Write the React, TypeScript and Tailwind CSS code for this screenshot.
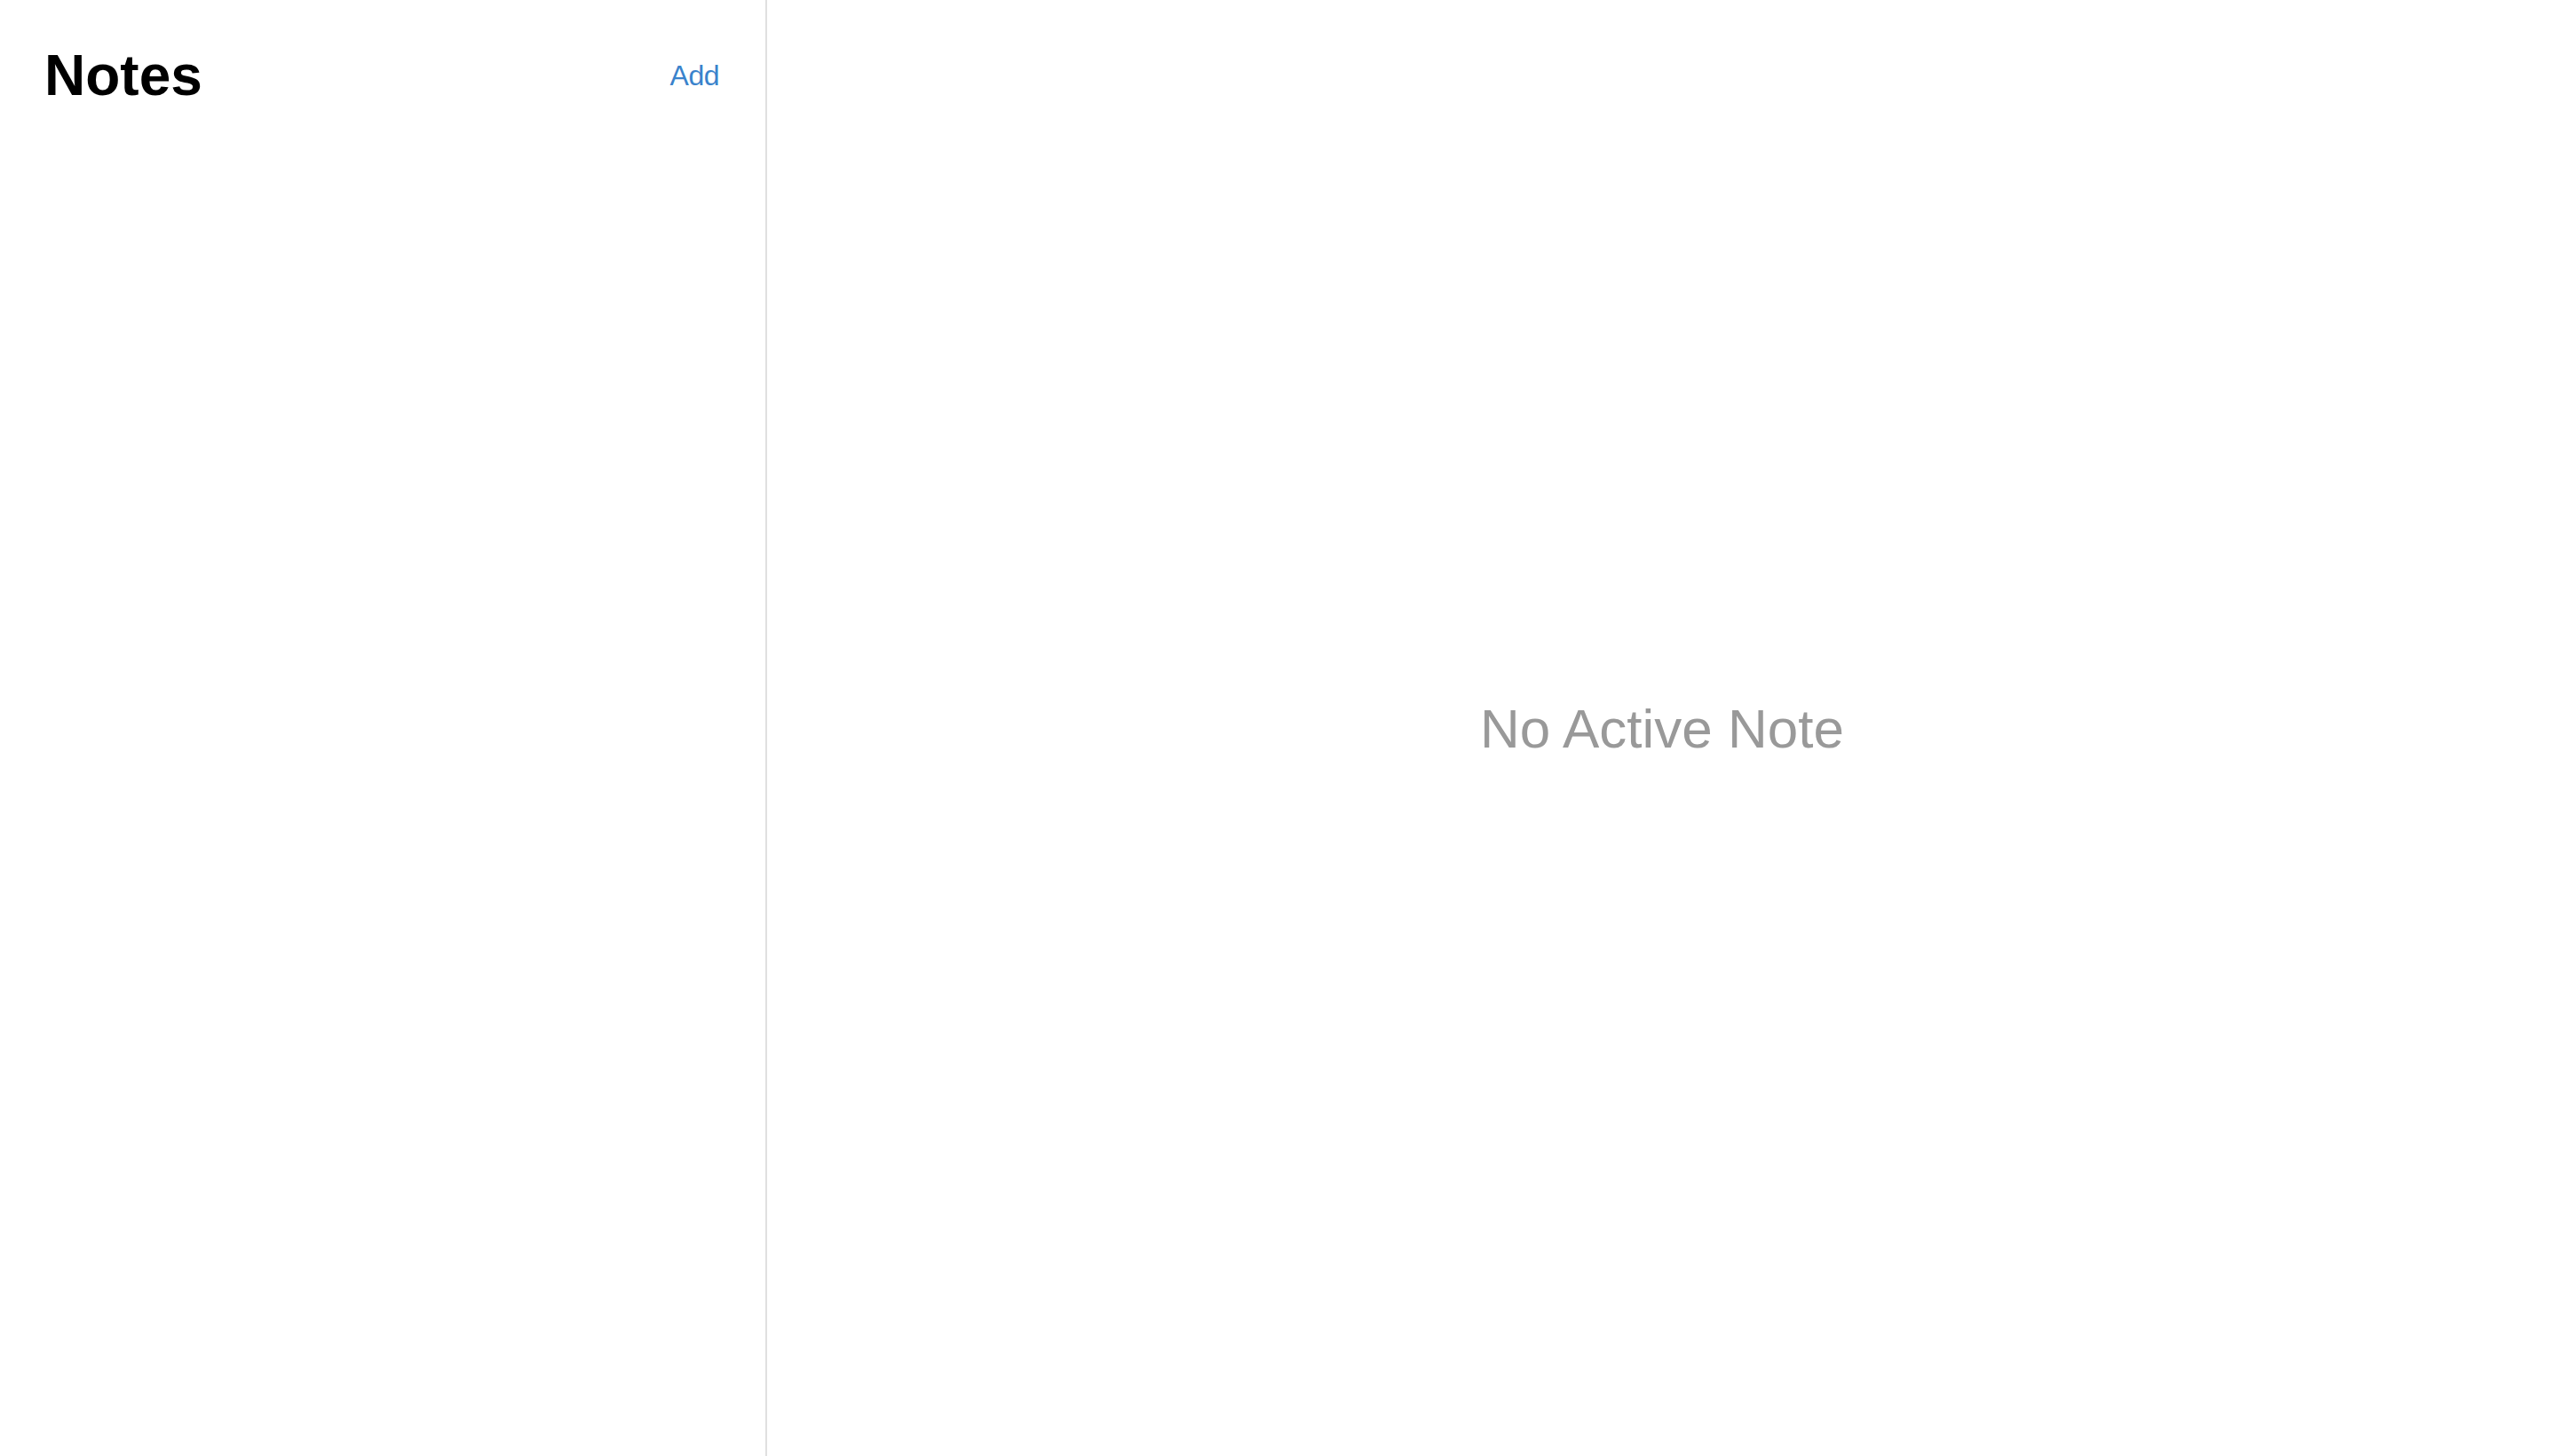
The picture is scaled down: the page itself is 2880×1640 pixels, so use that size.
import React from 'react';

const font = { fontFamily: '"Liberation Sans", Arial, sans-serif' };

const Sidebar: React.FC = () => {
  return (
    <aside className="flex h-full w-[864px] shrink-0 flex-col border-r-2 border-[#e0e0e0] bg-white">
      <div className="flex items-center justify-between pl-[50px] pr-[52px] pt-[49px]">
        <h1 className="text-[64px] font-bold leading-[72px] text-black">Notes</h1>
        <button className="cursor-pointer text-[32px] leading-[37px] tracking-[-0.5px] text-[#3a83cc]">
          Add
        </button>
      </div>
      <div className="flex-1" />
    </aside>
  );
};

const App: React.FC = () => {
  return (
    <div className="flex h-screen w-full bg-white" style={font}>
      <Sidebar />
      <main className="flex flex-1 items-center justify-center">
        <p className="text-[62px] leading-[71px] text-[#999999]">No Active Note</p>
      </main>
    </div>
  );
};

export default App;
